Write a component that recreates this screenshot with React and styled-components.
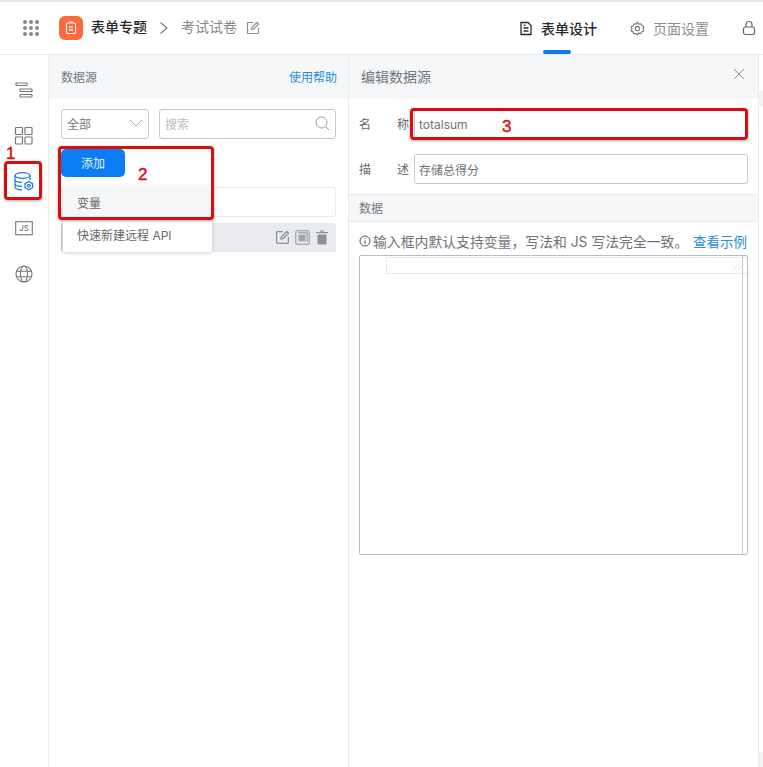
import React from "react";
import styled, { createGlobalStyle } from "styled-components";

const Global = createGlobalStyle`
  html, body { margin: 0; padding: 0; background: #fff; }
  body { font-family: Inter, "Noto Sans CJK SC", sans-serif; font-size: 12px; color: #555; }
  * { box-sizing: border-box; }
`;

const Page = styled.div`
  position: relative; width: 763px; height: 767px; overflow: hidden;
  display: flex; flex-direction: column; border-top: 2px solid #e4e4e4;
`;
const Header = styled.header`
  flex: none; height: 53px; display: flex; align-items: center;
  border-bottom: 1px solid #e8eaed; background: #fff; position: relative;
`;
const Grid = styled.span`
  width: 16px; margin-left: 23px; display: grid; grid-template-columns: repeat(3, 4px); gap: 2px;
  & > i { width: 4px; height: 4px; border-radius: 50%; background: #84888e; }
`;
const Logo = styled.div`
  width: 24px; height: 24px; margin-left: 20px; border-radius: 6px; background: #fb6a3e;
  display: flex; align-items: center; justify-content: center;
`;
const Title = styled.span`
  margin-left: 8px; font-size: 14px; font-weight: 500; color: #26282b; line-height: 18px; padding-bottom: 2px;
`;
const Crumb = styled.span`
  margin-left: 11px; font-size: 14px; color: #84888e; line-height: 18px; padding-bottom: 2px;
`;
const Tabs = styled.nav`
  margin-left: auto; display: flex; align-items: center; height: 100%;
`;
const Tab = styled.div`
  position: relative; height: 100%; display: flex; align-items: center; gap: 8px;
  font-size: 14px; color: ${p => (p.$active ? "#26282b" : "#8a8e94")};
  font-weight: ${p => (p.$active ? 500 : 400)};
  margin-right: 33px;
`;
const TabBar = styled.span`
  position: absolute; left: 24px; width: 28px; bottom: 0; height: 4px; border-radius: 2px; background: #0a7bee;
`;
const Body = styled.main`
  flex: 1; display: flex; min-height: 0;
`;
const Rail = styled.aside`
  flex: none; width: 49px; border-right: 1px solid #e8eaed; display: flex; flex-direction: column;
  align-items: center; padding-top: 12px;
`;
const RailItem = styled.div`
  width: 48px; height: 46px; display: flex; align-items: center; justify-content: center;
`;
const LeftPanel = styled.section`
  flex: none; width: 300px; border-right: 1px solid #e8eaed; display: flex; flex-direction: column;
`;
const PanelHead = styled.div`
  flex: none; height: 44px; background: #f5f6f8; display: flex; align-items: center;
  justify-content: space-between; padding: 0 11px 2px 12px; color: #72767c;
  font-size: ${p => p.$size || 12}px;
`;
const Help = styled.span` color: #1d8ce0; `;
const LeftBody = styled.div`
  position: relative; padding: 10px 12px 0; display: flex; flex-direction: column;
`;
const FilterRow = styled.div` display: flex; gap: 10px; `;
const Select = styled.div`
  width: 88px; height: 30px; border: 1px solid #c6c9ce; border-radius: 3px; display: flex;
  align-items: center; justify-content: space-between; padding: 0 5px 2px; color: #777;
`;
const Search = styled.div`
  flex: 1; height: 30px; border: 1px solid #c6c9ce; border-radius: 3px; display: flex;
  align-items: center; justify-content: space-between; padding: 0 5px 2px; color: #bbbec3;
`;
const AddBtn = styled.button`
  width: 64px; height: 28px; margin-top: 10px; border: 0; border-radius: 5px; background: #0a7df5; color: #e8f3ff;
  font: inherit; padding: 0 0 2px;
`;
const SearchInput = styled.div`
  height: 30px; margin-top: 10px; border: 1px solid #e8eaed; border-radius: 3px;
`;
const ListRow = styled.div`
  height: 29px; margin-top: 6px; background: #e8eaed; border-radius: 3px; display: flex; align-items: center;
  justify-content: flex-end; gap: 5px; padding-right: 7px; border-left: 1px solid #c8ccd0;
`;
const Menu = styled.div`
  position: absolute; left: 14px; top: 87px; width: 149px; background: #fff; border-radius: 3px;
  box-shadow: 0 1px 4px rgba(0,0,0,.18); padding-top: 1px;
`;
const MenuItem = styled.div`
  height: ${p => p.$h}px; display: flex; align-items: center; padding-left: 14px; color: #666;
  background: ${p => (p.$hover ? "#f5f6f8" : "#fff")};
  padding-bottom: ${p => p.$pb || 0}px;
`;
const RightPanel = styled.section`
  flex: none; width: 410px; border-right: 1px solid #e8eaed; display: flex; flex-direction: column;
`;
const Close = styled.span` display: flex; margin: -4px 2px 0 0; `;
const Form = styled.div` padding: 10px 10px 0 10px; display: flex; flex-direction: column; gap: 15px; `;
const Field = styled.label` display: flex; align-items: center; height: 30px; color: #666; `;
const FieldLabel = styled.span`
  width: 50px; display: flex; justify-content: space-between; margin-right: 5px; padding-bottom: 2px;
`;
const FieldBox = styled.div`
  flex: 1; height: 30px; border: 1px solid #c6c9ce; border-radius: 3px; display: flex; align-items: center;
  padding: 0 4px; color: #6e7277;
`;
const Section = styled.div`
  margin-top: 10px; height: 28px; background: #f5f6f8; border-top: 1px solid #e8eaed; border-bottom: 1px solid #e8eaed;
  display: flex; align-items: center; padding: 0 0 2px 10px; color: #72767c;
`;
const Hint = styled.div`
  margin: 10px 0 0 10px; width: 388px; height: 20px; display: flex; align-items: center; gap: 2px;
  font-size: 13.85px; color: #6e7277; white-space: nowrap; padding-bottom: 2px;
`;
const Link = styled.span` color: #2a8fce; margin-left: auto; font-size: 13.5px; `;
const Editor = styled.div`
  position: relative; margin: 3px 0 0 10px; width: 389px; height: 300px; border: 1px solid #b9bcc0; border-radius: 2px;
`;
const EditorGutter = styled.span`
  position: absolute; top: 0; right: 4px; bottom: 0; width: 1px; background: #c8cacd;
`;
const EditorLine = styled.span`
  position: absolute; top: 1px; left: 26px; right: 0; height: 17px; border: 1px solid #e8e9eb; border-right: 0;
`;
const EditorGrip = styled.svg`
  position: absolute; top: 4px; right: 4px;
`;
const Edge = styled.div`
  flex: 1; position: relative; background: #fff;
`;
const EdgePatch = styled.span`
  position: absolute; left: 0; right: 0; top: ${p => p.$top}px; height: ${p => p.$h}px; background: #f1f2f4;
`;
const Callout = styled.div`
  position: absolute; left: ${p => p.$x}px; top: ${p => p.$y}px; width: ${p => p.$w}px; height: ${p => p.$h}px;
  border: 3px solid #d80d12; border-radius: 4px; box-shadow: 0 1px 3px rgba(0,0,0,.35);
`;
const Num = styled.span`
  position: absolute; left: ${p => p.$x}px; top: ${p => p.$y}px; color: #d80d12; font-family: "Liberation Sans", sans-serif;
  font-size: 17px; line-height: 18px; -webkit-text-stroke: .4px #d80d12;
`;

const S = { fill: "none", stroke: "currentColor", strokeWidth: 1.2, strokeLinecap: "round", strokeLinejoin: "round" };

const Edit = ({ size = 14, color = "#8d9196" }) => (
  <svg width={size} height={size} viewBox="0 0 14 14" style={{ color }} {...S}>
    <path d="M7 1.500H2.500a1 1 0 0 0-1 1v9a1 1 0 0 0 1 1h9a1 1 0 0 0 1-1V7" />
    <path d="M5.500 8.500l.4-2L11 1.400l1.600 1.600L7.500 8.100z" />
  </svg>
);

export default function App() {
  return (
    <Page>
      <Global />
      <Header>
        <Grid>{Array.from({ length: 9 }, (_, i) => <i key={i} />)}</Grid>
        <Logo>
          <svg width="14" height="14" viewBox="0 0 14 14" fill="none" stroke="#fff" strokeWidth="1.2">
            <rect x="2.500" y="2" width="9" height="10.500" rx="1.500" />
            <path d="M5 1.200h4M5 6h4M5 8.800h4" />
          </svg>
        </Logo>
        <Title>表单专题</Title>
        <svg width="12" height="14" viewBox="0 0 12 14" style={{ marginLeft: 11 }} fill="none" stroke="#777" strokeWidth="1.100">
          <path d="M2.500 1.500L9 7l-6.500 5.500" />
        </svg>
        <Crumb>考试试卷</Crumb>
        <span style={{ marginLeft: 9, display: "flex" }}><Edit /></span>
        <Tabs>
          <Tab $active>
            <svg width="14" height="15" viewBox="0 0 14 15" fill="none" stroke="#26282b" strokeWidth="1.300">
              <path d="M2 1.500h7l3 3V13.500H2zM4.500 7h5M4.500 10h5M4.500 4.200h2" />
            </svg>
            表单设计
            <TabBar />
          </Tab>
          <Tab>
            <svg width="15" height="15" viewBox="0 0 24 24" fill="none" stroke="#74787e" strokeWidth="1.800">
              <circle cx="12" cy="12" r="3.500" />
              <path d="M12 2l2 3 3.500-.5L19 7.500l3 1.500-1 3.500 1 3-3 1.500-1.500 3-3.500-.5L12 22l-2-2-3.500.5L5 17.500 2 16l1-3.500L2 9l3-1.500L6.500 4.500 10 5z" />
            </svg>
            页面设置
          </Tab>
          <svg width="14" height="16" viewBox="0 0 14 16" style={{ marginRight: 7 }} fill="none" stroke="#666" strokeWidth="1.200">
            <rect x="1.500" y="7" width="11" height="7.500" rx="2" />
            <path d="M4 7V4.500a3 3 0 0 1 6 0V7" />
          </svg>
        </Tabs>
      </Header>
      <Body>
        <Rail>
          <RailItem>
            <svg width="18" height="18" viewBox="0 0 18 18" fill="none" stroke="#777" strokeWidth="1.200">
              <rect x="1" y="2" width="11" height="2.500" rx=".8" />
              <rect x="5" y="8" width="12" height="2.500" rx=".8" />
              <rect x="5" y="13.500" width="12" height="2.500" rx=".8" />
            </svg>
          </RailItem>
          <RailItem>
            <svg width="20" height="20" viewBox="0 0 20 20" fill="none" stroke="#777" strokeWidth="1.200">
              <rect x="1.500" y="1.500" width="7" height="7" rx=".8" />
              <rect x="11" y="1.500" width="7" height="7" rx=".8" />
              <rect x="1.500" y="11" width="7" height="7" rx=".8" />
              <rect x="11" y="11" width="7" height="7" rx=".8" />
            </svg>
          </RailItem>
          <RailItem>
            <svg width="20" height="20" viewBox="0 0 20 20" fill="none" stroke="#1678e0" strokeWidth="1.200">
              <ellipse cx="8.500" cy="3.500" rx="7.500" ry="2.800" />
              <path d="M1 3.500V15c0 1.500 3 2.800 7 2.800M16 3.500V8M1 7.500c0 1.500 3 2.800 7 2.800M1 11.500c0 1.500 3 2.800 7 2.800" />
              <path d="M14.800 9.500l3.800 2.100v4.100l-3.800 2.100-3.800-2.100v-4.100z" />
              <circle cx="14.800" cy="13.700" r="1.400" />
            </svg>
          </RailItem>
          <RailItem>
            <svg width="18" height="18" viewBox="0 0 18 18" fill="none">
              <rect x=".7" y="2.700" width="16.600" height="13" stroke="#777" strokeWidth="1.100" />
              <text x="9" y="12" textAnchor="middle" fontSize="8" fontFamily="Inter, sans-serif" fill="#666">JS</text>
            </svg>
          </RailItem>
          <RailItem>
            <svg width="18" height="18" viewBox="0 0 18 18" fill="none" stroke="#777" strokeWidth="1.100">
              <circle cx="9" cy="9" r="8" />
              <ellipse cx="9" cy="9" rx="3.500" ry="8" />
              <path d="M1.500 6.300h15M1.500 11.700h15" />
            </svg>
          </RailItem>
        </Rail>
        <LeftPanel>
          <PanelHead>数据源<Help>使用帮助</Help></PanelHead>
          <LeftBody>
            <FilterRow>
              <Select>
                全部
                <svg width="14" height="8" viewBox="0 0 14 8" fill="none" stroke="#aaa" strokeWidth="1"><path d="M1 1l6 6 6-6" /></svg>
              </Select>
              <Search>
                搜索
                <svg width="15" height="15" viewBox="0 0 15 15" fill="none" stroke="#999" strokeWidth="1"><circle cx="6.500" cy="6.500" r="5.500" /><path d="M10.500 10.500l3.500 3.500" /></svg>
              </Search>
            </FilterRow>
            <AddBtn>添加</AddBtn>
            <SearchInput />
            <ListRow>
              <Edit size={15} />
              <svg width="15" height="15" viewBox="0 0 15 15" fill="none" stroke="#8d9196" strokeWidth="1">
                <rect x=".8" y=".8" width="13.400" height="13.400" rx="1" />
                <path d="M3 2.800h9.200V12" />
                <rect x="3.500" y="4.500" width="7" height="7" fill="#a3a7ac" stroke="none" />
              </svg>
              <svg width="14" height="15" viewBox="0 0 14 15" fill="#8d9196">
                <rect x="1" y="2" width="12" height="1.200" />
                <rect x="5" y=".5" width="4" height="1.200" />
                <rect x="2.500" y="4.500" width="9" height="10" rx="1" />
              </svg>
            </ListRow>
            <Menu>
              <MenuItem $hover $h={31}>变量</MenuItem>
              <MenuItem $h={34} $pb={1}>快速新建远程 API</MenuItem>
            </Menu>
          </LeftBody>
        </LeftPanel>
        <RightPanel>
          <PanelHead $size={14}>
            编辑数据源
            <Close>
              <svg width="12" height="12" viewBox="0 0 12 12" fill="none" stroke="#8d9196" strokeWidth="1"><path d="M1 1l10 10M11 1L1 11" /></svg>
            </Close>
          </PanelHead>
          <Form>
            <Field><FieldLabel><span>名</span><span>称</span></FieldLabel><FieldBox>totalsum</FieldBox></Field>
            <Field><FieldLabel><span>描</span><span>述</span></FieldLabel><FieldBox>存储总得分</FieldBox></Field>
          </Form>
          <Section>数据</Section>
          <Hint>
            <svg width="12" height="12" viewBox="0 0 12 12" fill="none" stroke="#555" strokeWidth="1">
              <circle cx="6" cy="6" r="5" /><path d="M6 5.300V9M6 3v1" />
            </svg>
            输入框内默认支持变量，写法和 JS 写法完全一致。<Link>查看示例</Link>
          </Hint>
          <Editor>
            <EditorLine />
            <EditorGutter />
            <EditorGrip width="12" height="12" viewBox="0 0 12 12" fill="none" stroke="#e4e5e7" strokeWidth="1">
              <path d="M1 11L11 1M6 11l5-5" />
            </EditorGrip>
          </Editor>
        </RightPanel>
        <Edge>
          <EdgePatch $top={36} $h={15} />
          <EdgePatch $top={697} $h={15} />
        </Edge>
      </Body>
      <Callout $x={58} $y={144} $w={156} $h={74} />
      <Callout $x={410} $y={106} $w={338} $h={32} />
      <Callout $x={4} $y={159} $w={38} $h={39} />
      <Num $x={6} $y={143}>1</Num>
      <Num $x={138} $y={164}>2</Num>
      <Num $x={502} $y={116}>3</Num>
    </Page>
  );
}
